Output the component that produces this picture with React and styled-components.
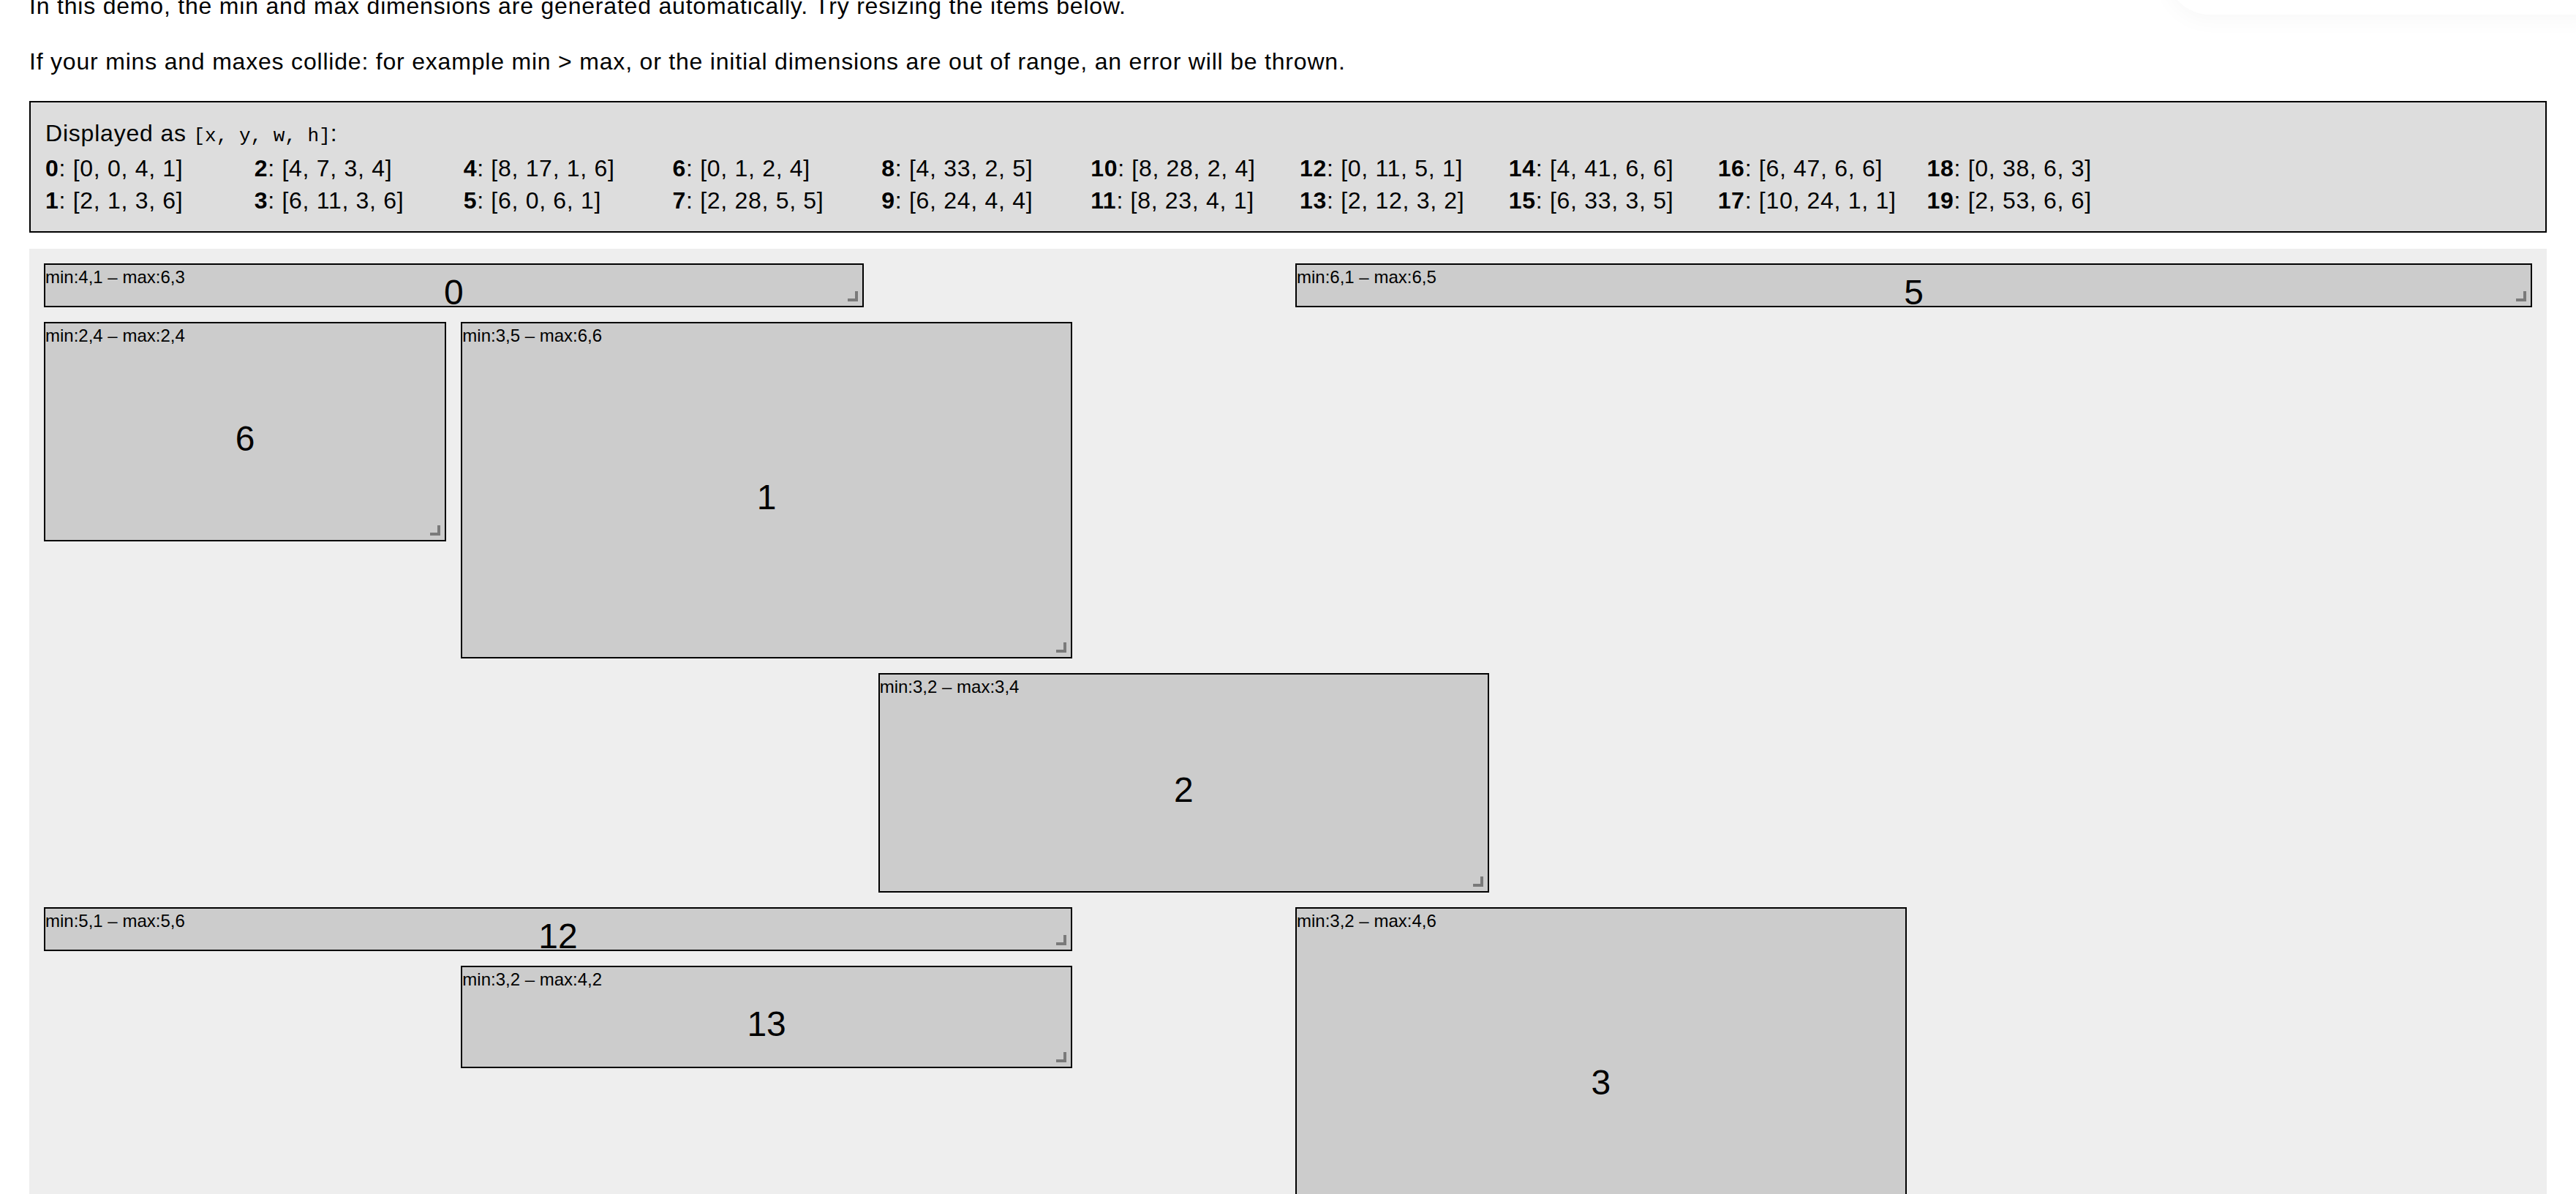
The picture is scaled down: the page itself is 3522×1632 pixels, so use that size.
import React from "react"
import styled, { createGlobalStyle } from "styled-components"

const COLS = 12
const ROW_H = 60
const MARGIN = 20
const GRID_W = 3442

// [x, y, w, h] plus the generated min / max sizes
const layout = [
  { i: 0, x: 0, y: 0, w: 4, h: 1, min: [4, 1], max: [6, 3] },
  { i: 1, x: 2, y: 1, w: 3, h: 6, min: [3, 5], max: [6, 6] },
  { i: 2, x: 4, y: 7, w: 3, h: 4, min: [3, 2], max: [3, 4] },
  { i: 3, x: 6, y: 11, w: 3, h: 6, min: [3, 2], max: [4, 6] },
  { i: 4, x: 8, y: 17, w: 1, h: 6, min: [1, 4], max: [2, 6] },
  { i: 5, x: 6, y: 0, w: 6, h: 1, min: [6, 1], max: [6, 5] },
  { i: 6, x: 0, y: 1, w: 2, h: 4, min: [2, 4], max: [2, 4] },
  { i: 7, x: 2, y: 28, w: 5, h: 5, min: [4, 5], max: [6, 6] },
  { i: 8, x: 4, y: 33, w: 2, h: 5, min: [2, 3], max: [3, 5] },
  { i: 9, x: 6, y: 24, w: 4, h: 4, min: [3, 4], max: [5, 4] },
  { i: 10, x: 8, y: 28, w: 2, h: 4, min: [2, 2], max: [4, 5] },
  { i: 11, x: 8, y: 23, w: 4, h: 1, min: [4, 1], max: [6, 2] },
  { i: 12, x: 0, y: 11, w: 5, h: 1, min: [5, 1], max: [5, 6] },
  { i: 13, x: 2, y: 12, w: 3, h: 2, min: [3, 2], max: [4, 2] },
  { i: 14, x: 4, y: 41, w: 6, h: 6, min: [5, 6], max: [6, 6] },
  { i: 15, x: 6, y: 33, w: 3, h: 5, min: [3, 3], max: [4, 5] },
  { i: 16, x: 6, y: 47, w: 6, h: 6, min: [6, 4], max: [6, 6] },
  { i: 17, x: 10, y: 24, w: 1, h: 1, min: [1, 1], max: [3, 4] },
  { i: 18, x: 0, y: 38, w: 6, h: 3, min: [5, 3], max: [6, 3] },
  { i: 19, x: 2, y: 53, w: 6, h: 6, min: [4, 6], max: [6, 6] },
]

const colW = (GRID_W - MARGIN * (COLS + 1)) / COLS

const place = (l) => ({
  left: MARGIN + l.x * (colW + MARGIN),
  top: MARGIN + l.y * (ROW_H + MARGIN),
  width: l.w * colW + (l.w - 1) * MARGIN,
  height: l.h * ROW_H + (l.h - 1) * MARGIN,
})

const gridHeight =
  Math.max(...layout.map((l) => l.y + l.h)) * (ROW_H + MARGIN) + MARGIN

const GlobalStyle = createGlobalStyle`
  html::-webkit-scrollbar { display: none; }
  html { scrollbar-width: none; }
  body {
    margin: 0;
    background: #fff;
    color: #000;
    font-family: "Liberation Sans", Arial, sans-serif;
    font-size: 32px;
    line-height: 44px;
    letter-spacing: 0.8px;
  }
`

const Page = styled.div`
  padding: 0 40px 40px;
  overflow: hidden;
`

const Intro = styled.p`
  margin: 32px 0;
  &:first-child {
    margin-top: -14px;
  }
`

const LayoutJSON = styled.div`
  background: #ddd;
  border: 2px solid #000;
  margin-top: 32px;
  padding: 20px;
`

const Code = styled.code`
  font-family: "Liberation Mono", "DejaVu Sans Mono", monospace;
  font-size: 26px;
  letter-spacing: 0;
`

const Columns = styled.div`
  columns: 240px;
  column-gap: 32px;
`

const LayoutItem = styled.div`
  break-inside: avoid;
  white-space: nowrap;
  letter-spacing: 0.7px;
`

const GridArea = styled.div`
  position: relative;
  margin-top: 22px;
  background: #eee;
`

const GridItem = styled.div`
  position: absolute;
  box-sizing: border-box;
  background: #ccc;
  border: 2px solid #000;
  letter-spacing: 0;
`

const MinMax = styled.div`
  font-size: 24px;
  line-height: 33px;
  white-space: nowrap;
`

const BigText = styled.span`
  position: absolute;
  top: 0;
  bottom: 0;
  left: 0;
  right: 0;
  margin: auto;
  height: 48px;
  font-size: 48px;
  line-height: 67px;
  text-align: center;
`

const ResizeHandle = styled.span`
  position: absolute;
  right: 0;
  bottom: 0;
  width: 40px;
  height: 40px;
  &::after {
    content: "";
    position: absolute;
    right: 6px;
    bottom: 6px;
    width: 10px;
    height: 10px;
    border-right: 4px solid rgba(0, 0, 0, 0.4);
    border-bottom: 4px solid rgba(0, 0, 0, 0.4);
  }
`

const TopCap = styled.div`
  position: fixed;
  top: -100px;
  right: -60px;
  width: 620px;
  height: 120px;
  border-radius: 90px;
  background: #fff;
  box-shadow: 0 8px 30px rgba(0, 0, 0, 0.03);
`

export default function App() {
  return (
    <>
      <GlobalStyle />
      <Page>
        <Intro>
          In this demo, the min and max dimensions are generated automatically.
          Try resizing the items below.
        </Intro>
        <Intro>
          If your mins and maxes collide: for example min &gt; max, or the
          initial dimensions are out of range, an error will be thrown.
        </Intro>
        <LayoutJSON>
          Displayed as <Code>[x, y, w, h]</Code>:
          <Columns>
            {layout.map((l) => (
              <LayoutItem key={l.i}>
                <b>{l.i}</b>: [{l.x}, {l.y}, {l.w}, {l.h}]
              </LayoutItem>
            ))}
          </Columns>
        </LayoutJSON>
        <GridArea style={{ height: gridHeight }}>
          {layout.map((l) => (
            <GridItem key={l.i} style={place(l)}>
              <MinMax>
                {`min:${l.min[0]},${l.min[1]} – max:${l.max[0]},${l.max[1]}`}
              </MinMax>
              <BigText>{l.i}</BigText>
              <ResizeHandle />
            </GridItem>
          ))}
        </GridArea>
      </Page>
      <TopCap />
    </>
  )
}
